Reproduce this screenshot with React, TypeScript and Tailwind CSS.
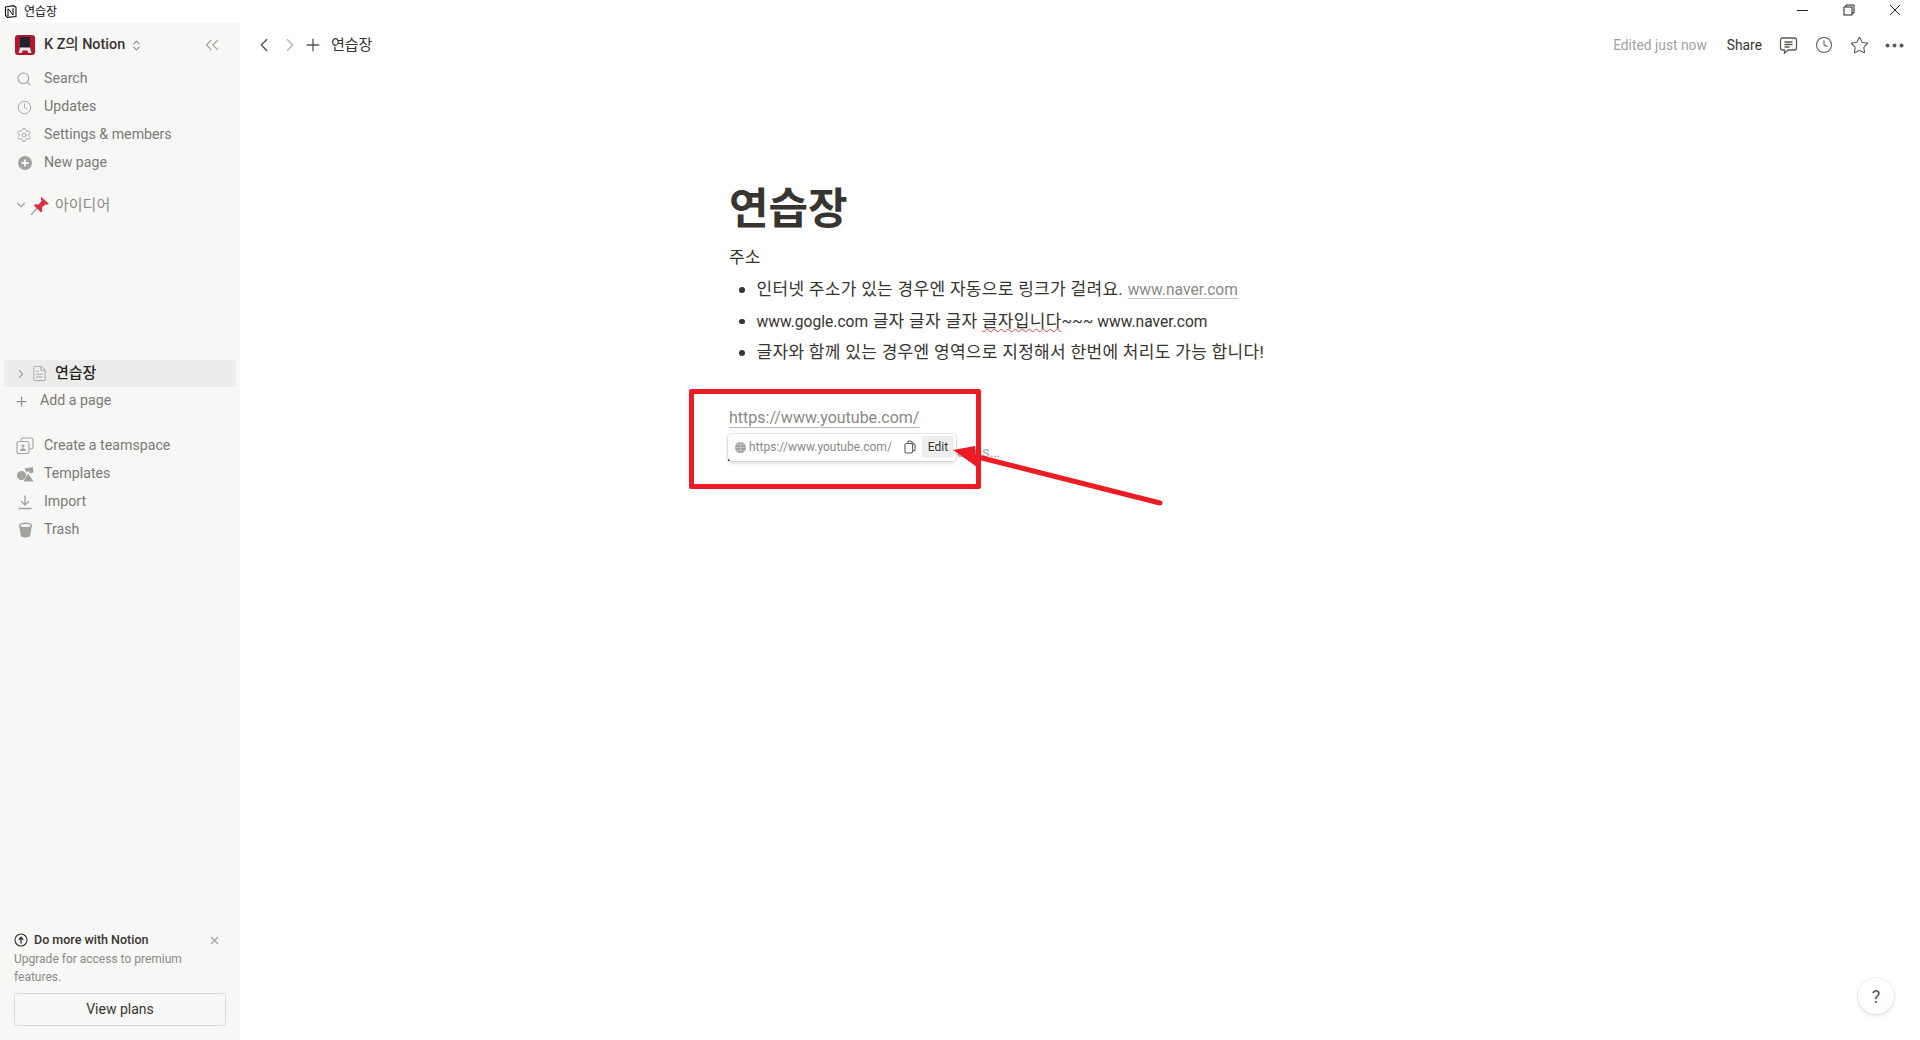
import {
  ChevronDown,
  ChevronLeft,
  ChevronRight,
  ChevronsLeft,
  ChevronsUpDown,
  Clock,
  FileText,
  Plus,
  Search,
  Settings,
  Star,
  X,
} from "lucide-react";
import type { ReactNode } from "react";

const font = "font-['Roboto','Noto_Sans_CJK_KR',sans-serif]";

function NavRow({ icon, label }: { icon: ReactNode; label: string }) {
  return (
    <div className="flex h-[28px] items-center pl-[16px] text-[14.200px] text-[#7b7a75]">
      <span className="flex w-[28px] shrink-0 items-center justify-start text-[#a3a29e]">{icon}</span>
      <span>{label}</span>
    </div>
  );
}

function CirclePlus() {
  return (
    <svg width="16" height="16" viewBox="0 0 16 16" className="ml-[1px]">
      <circle cx="8" cy="8" r="7" fill="#a3a29e" />
      <path d="M8 4.500v7M4.500 8h7" stroke="#f7f7f5" strokeWidth="1.800" />
    </svg>
  );
}

function TeamIcon() {
  return (
    <svg width="18" height="18" viewBox="0 0 18 18" fill="none" stroke="#a3a29e" strokeWidth="1.100">
      <rect x="1" y="4.500" width="12" height="12" rx="2" />
      <path d="M5 4V2.800A1.800 1.800 0 0 1 6.800 1h8.400A1.800 1.800 0 0 1 17 2.800v7.400a1.800 1.800 0 0 1-1.800 1.800H13.500" />
      <circle cx="7" cy="9" r="1.500" fill="#a3a29e" stroke="none" />
      <path d="M4 14c.3-2 1.600-2.800 3-2.800s2.700.8 3 2.800z" fill="#a3a29e" stroke="none" />
    </svg>
  );
}

function TemplatesIcon() {
  return (
    <svg width="17" height="15" viewBox="0 0 17 15" fill="#a3a29e" className="ml-[1px]">
      <circle cx="4.500" cy="8.500" r="4.500" />
      <path d="M7.500 1.500 15.800 0l.8 5.500-3.400.8L10.800 4 9.300 5.500z" />
      <path d="M11 6.500 16.500 14.500H6.500z" />
    </svg>
  );
}

function ImportIcon() {
  return (
    <svg width="16" height="16" viewBox="0 0 16 16" fill="none" stroke="#a3a29e" strokeWidth="1.400" className="ml-[1px]">
      <path d="M8 1.500v9M4 7l4 4 4-4M1.500 14.500h13" />
    </svg>
  );
}

function TrashIcon() {
  return (
    <svg width="15" height="16" viewBox="0 0 15 16" fill="#a3a29e" className="ml-[2px]">
      <path d="M1 3.500C1 1.500 4 .5 7.500.5S14 1.500 14 3.500c0 .7-.2 1.400-.5 2L12.300 13.500c-.2 1.300-2.300 2-4.800 2s-4.600-.7-4.800-2L1.500 5.500C1.200 4.900 1 4.200 1 3.500Z" />
      <ellipse cx="7.500" cy="3.500" rx="5" ry="1.500" fill="#f7f7f5" />
    </svg>
  );
}

function PinEmoji() {
  return (
    <svg width="20" height="21" viewBox="0 0 18 19">
      <path d="M1 18 7 11" stroke="#9aa3ab" strokeWidth="1.300" />
      <path d="M10 1.500 17 8l-2 1-1-.6-3.200 3 .3 3.200-1.300 1L3.500 9.500l1-1.200 3.300.2 2.800-3.300-.8-1.200Z" fill="#dd2e44" />
    </svg>
  );
}

function WorkspaceIcon() {
  return (
    <svg width="20" height="20" viewBox="0 0 20 20" className="shrink-0 rounded-[3px]">
      <rect width="20" height="20" fill="#b3162c" />
      <rect x="5" y="2" width="10" height="11" fill="#20242c" />
      <path d="M3.500 18 5 12.500h10L16.500 18h-3L12 15.500H8L6.500 18Z" fill="#e6e6ea" />
    </svg>
  );
}

function NotionGlyph() {
  return (
    <svg width="13" height="13" viewBox="0 0 13 13" fill="none" stroke="#111" className="shrink-0">
      <path d="M1.500 2 9.500.7 12 2.300v9.300l-8.700.8-1.800-2.200Z" strokeWidth="1.100" />
      <path d="M4 4.500v5.500M4 4.500h1l4 5.500V4M3.300 4.300h2M8.200 4h1.700M3.200 10.100h1.700" strokeWidth="1" />
    </svg>
  );
}

function Sidebar() {
  return (
    <aside className="flex w-[240px] shrink-0 flex-col bg-[#f7f7f5]">
      <div className="flex h-[44px] items-center pl-[15px] pr-[17px]">
        <WorkspaceIcon />
        <span className="ml-[9px] text-[14.400px] font-medium text-[#37352f]">K Z의 Notion</span>
        <ChevronsUpDown className="ml-[5px] size-[13px] text-[#8f8e8a]" />
        <ChevronsLeft className="ml-auto size-[22px] text-[#a3a29e]" strokeWidth={1.300} />
      </div>
      <div className="mt-[-2px]">
        <NavRow icon={<Search className="size-[16px]" strokeWidth={1.600} />} label="Search" />
        <NavRow icon={<Clock className="size-[15px] ml-[1px]" strokeWidth={1.500} />} label="Updates" />
        <NavRow icon={<Settings className="size-[16px]" strokeWidth={1.400} />} label="Settings & members" />
        <NavRow icon={<CirclePlus />} label="New page" />
      </div>
      <div className="mt-[14px] flex h-[28px] items-center pl-[14px] text-[15px] text-[#8b8a85]">
        <ChevronDown className="size-[14px] text-[#a3a29e]" />
        <span className="ml-[2px]"><PinEmoji /></span>
        <span className="ml-[5px]">아이디어</span>
      </div>
      <div className="mx-[4px] mt-[141px] flex h-[27px] items-center rounded-[3px] bg-[#ececea] pl-[10px] text-[15px] text-[#26251f]">
        <ChevronRight className="size-[14px] text-[#a3a29e]" />
        <FileText className="ml-[3px] size-[17px] text-[#a3a29e]" strokeWidth={1.300} />
        <span className="ml-[7px] font-medium">연습장</span>
      </div>
      <div className="flex h-[28px] items-center pl-[14px] text-[14.200px] text-[#7b7a75]">
        <Plus className="size-[15px] text-[#8f8e8a]" />
        <span className="ml-[11px]">Add a page</span>
      </div>
      <div className="mt-[17px]">
        <NavRow icon={<TeamIcon />} label="Create a teamspace" />
        <NavRow icon={<TemplatesIcon />} label="Templates" />
        <NavRow icon={<ImportIcon />} label="Import" />
        <NavRow icon={<TrashIcon />} label="Trash" />
      </div>
      <div className="mt-auto px-[14px] pb-[14px]">
        <div className="flex h-[20px] items-center text-[12.500px] font-medium text-[#37352f]">
          <svg width="14" height="14" viewBox="0 0 14 14" fill="none" stroke="#37352f" strokeWidth="1.100" className="mr-[6px]">
            <circle cx="7" cy="7" r="6" />
            <path d="M7 10.500V4.500M4.800 6.800 7 4.300l2.200 2.500" strokeWidth="1.300" />
          </svg>
          Do more with Notion
          <X className="ml-auto mr-[5px] size-[13px] text-[#a3a29e]" strokeWidth={2} />
        </div>
        <p className="text-[12px] leading-[18px] text-[#8b8a85]">
          Upgrade for access to premium features.
        </p>
        <button className="mt-[7px] h-[33px] w-full rounded-[3px] border border-[#dcdcda] text-[14px] text-[#37352f]">
          View plans
        </button>
      </div>
    </aside>
  );
}

function TopBar() {
  return (
    <div className="flex h-[44px] shrink-0 items-center pl-[13px] pr-[16px] text-[14px] text-[#37352f]">
      <ChevronLeft className="size-[22px] text-[#5a5955]" strokeWidth={1.600} />
      <ChevronRight className="ml-[4px] size-[22px] text-[#b9b8b5]" strokeWidth={1.600} />
      <Plus className="ml-[2px] size-[20px] text-[#55544f]" strokeWidth={1.600} />
      <span className="ml-[8px] text-[15px]">연습장</span>
      <span className="ml-auto text-[13.800px] text-[#a3a29e]">Edited just now</span>
      <span className="ml-[20px] text-[13.800px]">Share</span>
      <svg width="19" height="19" viewBox="0 0 19 19" fill="none" stroke="#5a5955" strokeWidth="1.300" className="ml-[17px]">
        <path d="M3.500 2h12A2 2 0 0 1 17.500 4v8a2 2 0 0 1-2 2H9l-3.500 3v-3h-2a2 2 0 0 1-2-2V4a2 2 0 0 1 2-2Z" />
        <path d="M5.500 6h8M5.500 8.500h8M5.500 11h5" />
      </svg>
      <Clock className="ml-[17px] size-[18px] text-[#5a5955]" strokeWidth={1.400} />
      <Star className="ml-[17px] size-[19px] text-[#5a5955]" strokeWidth={1.400} />
      <svg width="19" height="5" viewBox="0 0 19 5" fill="#5a5955" className="ml-[16px]">
        <circle cx="2.500" cy="2.500" r="2" />
        <circle cx="9.500" cy="2.500" r="2" />
        <circle cx="16.500" cy="2.500" r="2" />
      </svg>
    </div>
  );
}

function Bullet({ children }: { children: ReactNode }) {
  return (
    <li className="flex h-[31.500px] items-center text-[17px] tracking-[0.3px] text-[#37352f]">
      <span className="ml-[10px] mr-[12px] size-[5.500px] shrink-0 rounded-full bg-[#37352f]" />
      <span className="whitespace-nowrap">{children}</span>
    </li>
  );
}

function LinkPopup() {
  return (
    <div className="absolute left-[-1px] top-[28px] flex h-[27px] w-[228px] items-center rounded-[4px] bg-white pl-[7px] pr-[2px] text-[12px] text-[#8b8a85] shadow-[0_0_0_1px_rgba(15,15,15,0.08),0_2px_5px_rgba(15,15,15,0.15)]">
      <svg width="11" height="11" viewBox="0 0 11 11" fill="#a3a29e">
        <circle cx="5.500" cy="5.500" r="5.500" />
        <path d="M0 5.500h11M5.500 0v11M1.500 2.500h8M1.500 8.500h8" stroke="#ddd" strokeWidth="0.500" />
      </svg>
      <span className="ml-[3px] whitespace-nowrap">https://www.youtube.com/</span>
      <svg width="12" height="14" viewBox="0 0 12 14" fill="none" stroke="#5a5955" strokeWidth="1.100" className="ml-auto mr-[6px]">
        <rect x="1" y="3.500" width="7.500" height="9.500" rx="1.500" />
        <path d="M4 3V2.300A1.300 1.300 0 0 1 5.300 1h1.400L11 5v4.500a1.300 1.300 0 0 1-1.300 1.300H8.500" />
      </svg>
      <span className="flex h-[22px] w-[32px] items-center justify-center rounded-[3px] bg-[#efefee] text-[#37352f]">Edit</span>
    </div>
  );
}

function Page() {
  return (
    <div className="mx-auto w-[702px]">
      <h1 className="mt-[116px] text-[43px] font-bold leading-[52px] text-[#37352f]">연습장</h1>
      <p className="mt-[10px] text-[17px] leading-[24px] text-[#37352f]">주소</p>
      <ul className="mt-[5px]">
        <Bullet>
          인터넷 주소가 있는 경우엔 자동으로 링크가 걸려요.{" "}
          <span className="text-[15.600px] tracking-normal text-[#8b8a85] underline decoration-[#c5c4c1] underline-offset-[3px]">www.naver.com</span>
        </Bullet>
        <Bullet>
          <span className="text-[15.600px] tracking-normal">www.gogle.com</span> 글자 글자 글자{" "}
          <span className="underline decoration-[#e03e3e] decoration-wavy decoration-1">글자입니다</span>
          <span className="text-[15.600px] tracking-normal">~~~ www.naver.com</span>
        </Bullet>
        <Bullet>글자와 함께 있는 경우엔 영역으로 지정해서 한번에 처리도 가능 합니다!</Bullet>
      </ul>
      <div className="relative mt-[37px] h-[68px]">
        <p className="text-[16px] leading-[24px] text-[#8b8a85]">
          <span className="underline decoration-[#b8b7b4] underline-offset-[4px]">https://www.youtube.com/</span>
        </p>
        <p className="absolute left-[228px] top-[35px] text-[15px] text-[#a3a29e]">ands…</p>
        <div className="absolute left-[-1px] top-[45px] h-[10px] w-[2px] bg-[#37352f]" />
        <LinkPopup />
      </div>
    </div>
  );
}

function Annotation() {
  return (
    <>
      <div className="absolute left-[689px] top-[389px] h-[100px] w-[292px] rounded-[2px] border-[5px] border-[#ed1c24]" />
      <svg width="230" height="80" viewBox="0 0 230 80" className="absolute left-[945px] top-[440px]">
        <path d="M215 63 25 15" stroke="#ed1c24" strokeWidth="5" strokeLinecap="round" />
        <path d="M8 10 30 6 32 27Z" fill="#ed1c24" />
      </svg>
    </>
  );
}

export default function App() {
  return (
    <div className={`relative flex h-[1040px] w-[1920px] flex-col overflow-hidden bg-white ${font}`}>
      <div className="flex h-[23px] shrink-0 items-center pl-[4px] text-[12px] text-[#111]">
        <NotionGlyph />
        <span className="ml-[7px]">연습장</span>
        <div className="ml-auto flex items-center pb-[3px]">
          <span className="mr-[35px] h-[1px] w-[11px] bg-[#222]" />
          <svg width="12" height="12" viewBox="0 0 12 12" fill="none" stroke="#222" className="mr-[34px]">
            <rect x="1" y="3" width="8" height="8" />
            <path d="M3 3V1h8v8H9" />
          </svg>
          <svg width="12" height="12" viewBox="0 0 12 12" fill="none" stroke="#222" className="mr-[19px]">
            <path d="M1 1l10 10M11 1 1 11" />
          </svg>
        </div>
      </div>
      <div className="flex min-h-0 flex-1">
        <Sidebar />
        <main className="relative flex min-w-0 flex-1 flex-col">
          <TopBar />
          <Page />
          <div className="absolute bottom-[26px] right-[26px] flex size-[36px] items-center justify-center rounded-full bg-white text-[18px] text-[#55544f] shadow-[0_0_0_1px_rgba(15,15,15,0.05),0_2px_4px_rgba(15,15,15,0.1)]">
            ?
          </div>
        </main>
      </div>
      <Annotation />
    </div>
  );
}
